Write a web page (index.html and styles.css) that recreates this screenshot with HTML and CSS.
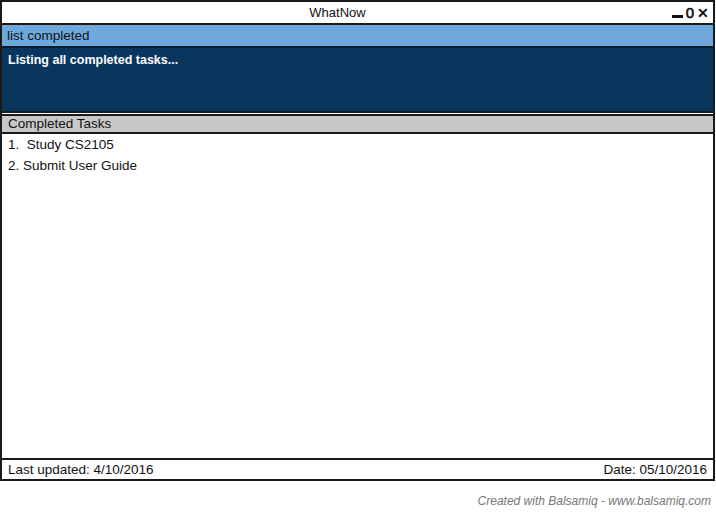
FILE: index.html
```html
<!DOCTYPE html>
<html>
<head>
<meta charset="utf-8">
<link rel="stylesheet" href="styles.css">
</head>
<body>
<div class="window">
  <div class="titlebar">
    <span class="title">WhatNow</span>
    <span class="controls"><span class="min"></span><span class="max">0</span><span class="close">✕</span></span>
  </div>
  <div class="command">list completed</div>
  <div class="output">Listing all completed tasks...</div>
  <div class="gap"></div>
  <div class="listhead">Completed Tasks</div>
  <div class="list">
    <div class="item">1.&nbsp; Study CS2105</div>
    <div class="item">2. Submit User Guide</div>
  </div>
  <div class="footer">
    <span>Last updated: 4/10/2016</span>
    <span>Date: 05/10/2016</span>
  </div>
</div>
<div class="credit">Created with Balsamiq - www.balsamiq.com</div>
</body>
</html>
```
FILE: styles.css
```css
html, body {
  margin: 0;
  padding: 0;
  background: #fff;
}
body {
  font-family: "Liberation Sans", Arial, sans-serif;
  font-size: 13.5px;
  color: #111;
  width: 716px;
  height: 512px;
}
.window {
  box-sizing: border-box;
  width: 715px;
  height: 481px;
  border: 2px solid #1a1a1a;
  display: flex;
  flex-direction: column;
}
.titlebar {
  position: relative;
  height: 21px;
  flex: none;
  display: flex;
  align-items: center;
  justify-content: center;
  padding-right: 40px;
  border-bottom: 2px solid #1a1a1a;
  font-size: 13px;
}
.controls {
  position: absolute;
  right: 4px;
  top: 2px;
  display: flex;
  align-items: center;
  gap: 3px;
  font-weight: bold;
}
.min {
  display: inline-block;
  width: 11px;
  height: 3px;
  background: #111;
  margin-top: 8px;
}
.max { font-size: 15px; font-weight: normal; -webkit-text-stroke: 0.6px #111; }
.close { font-size: 14px; margin-top: 1px; }
.command {
  flex: none;
  height: 21px;
  background: #6fa8dc;
  border-bottom: 2px solid #1a1a1a;
  padding-left: 5px;
  line-height: 21px;
}
.output {
  flex: none;
  height: 58px;
  background: #0a365e;
  color: #fff;
  font-weight: bold;
  font-size: 12.5px;
  padding: 5px 0 0 6px;
  border-bottom: 2px solid #1a1a1a;
}
.gap {
  flex: none;
  height: 1px;
  background: #fff;
}
.listhead {
  flex: none;
  height: 16px;
  line-height: 16px;
  background: #c8c8c8;
  border-top: 2px solid #1a1a1a;
  border-bottom: 2px solid #1a1a1a;
  padding-left: 6px;
}
.list {
  flex: 1;
  padding: 1px 0 0 6px;
  border-bottom: 2px solid #1a1a1a;
}
.item {
  height: 21px;
  line-height: 20px;
}
.footer {
  flex: none;
  height: 19px;
  display: flex;
  justify-content: space-between;
  align-items: center;
  padding: 0 6px;
}
.credit {
  margin-top: 13px;
  text-align: right;
  padding-right: 5px;
  font-style: italic;
  font-size: 12px;
  color: #777;
}
```
